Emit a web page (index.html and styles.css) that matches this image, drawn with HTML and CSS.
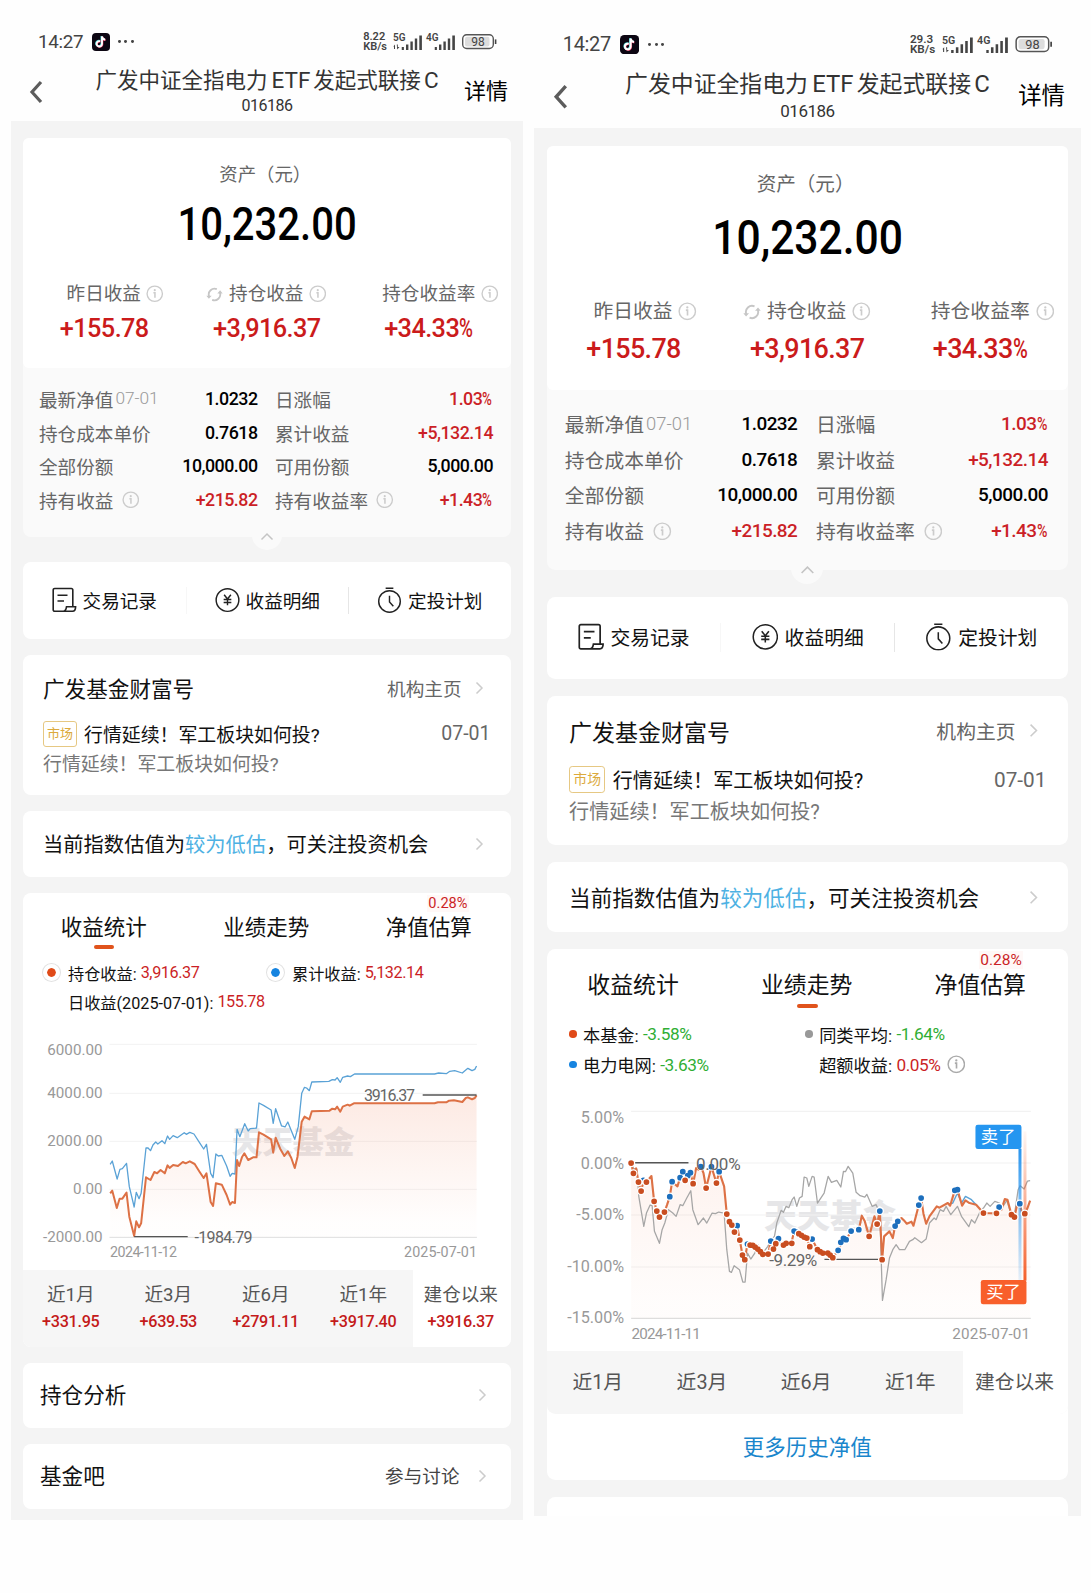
FILE: index.html
```html
<!DOCTYPE html>
<html lang="zh-CN">
<head>
  <meta charset="UTF-8">
  <meta name="viewport" content="width=device-width, initial-scale=1.0">
  <title>广发中证全指电力ETF发起式联接C</title>
  <link rel="stylesheet" href="styles.css">
</head>
<body>
  <!-- shared icons -->
  <svg class="sprite">
    <symbol id="info" viewBox="0 0 18 18">
      <circle cx="9" cy="9" r="7.9" fill="none" stroke="currentColor" stroke-width="1.4"/>
      <circle cx="9" cy="5.3" r="1.1" fill="currentColor"/>
      <path d="M7.6 7.9H9.2V13" fill="none" stroke="currentColor" stroke-width="1.6"/>
    </symbol>
    <symbol id="refresh" viewBox="0 0 18 16">
      <path d="M3.2 10A6.2 6.2 0 0 1 11.5 2.3M14.8 6A6.2 6.2 0 0 1 6.500 13.700" fill="none" stroke="currentColor" stroke-width="1.9"/>
      <path d="M.3 9.2H6L3 12.6zM12 6.8H17.7L15 3.4z" fill="currentColor"/>
    </symbol>
    <symbol id="arrow" viewBox="0 0 9 14">
      <path d="M1.5 1.5L7 7L1.5 12.5" fill="none" stroke="#ccc" stroke-width="1.5"/>
    </symbol>
    <symbol id="back" viewBox="0 0 14 24">
      <path d="M12 2L3 12L12 22" fill="none" stroke="#5c5c5c" stroke-width="3.2"/>
    </symbol>
    <symbol id="tiktok" viewBox="0 0 18 18">
      <rect width="18" height="18" rx="4" fill="#0c0612"/>
      <g fill="none" stroke-width="1.9">
        <path d="M8.2 8.3A2.7 2.7 0 1 0 10 11V3.4C10.2 5.2 11.4 6.4 13.2 6.6" stroke="#4de0e0" transform="translate(-.5 -.4)"/>
        <path d="M8.2 8.3A2.7 2.7 0 1 0 10 11V3.4C10.2 5.2 11.4 6.4 13.2 6.6" stroke="#e8345c" transform="translate(.4 .4)"/>
        <path d="M8.2 8.3A2.7 2.7 0 1 0 10 11V3.4C10.2 5.2 11.4 6.4 13.2 6.6" stroke="#fff"/>
      </g>
    </symbol>
    <symbol id="bars" viewBox="0 0 22 17">
      <path d="M0 14h2.4v3H0zM4.500 11.500h2.400V17H4.500zM8.900 8.600h2.400V17H8.900zM13.300 5.600h2.400V17h-2.400zM17.800 2.400h2.600V17h-2.600z" fill="#444"/>
    </symbol>
    <symbol id="receipt" viewBox="0 0 25 26">
      <path d="M20.8 19V3.2A1.5 1.5 0 0 0 19.3 1.5H2.7A1.5 1.5 0 0 0 1.2 3V22.8A1.5 1.5 0 0 0 2.7 24.3H20.5C22.8 24.3 23.6 22.5 23.6 19.8H14.5C14 23 13 24.3 11.2 24.3M5.5 8.2H15.5M5.5 14H12" fill="none" stroke="#222" stroke-width="1.6"/>
    </symbol>
    <symbol id="yen" viewBox="0 0 26 26">
      <circle cx="13" cy="13" r="11.8" fill="none" stroke="#222" stroke-width="1.5"/>
      <path d="M9.5 7.5L13 12L16.5 7.5M13 12V18.5M9 12.5H17M9 15.5H17" fill="none" stroke="#222" stroke-width="1.5"/>
    </symbol>
    <symbol id="timer" viewBox="0 0 25 27">
      <circle cx="12.5" cy="15" r="11.2" fill="none" stroke="#222" stroke-width="1.5"/>
      <path d="M8.5 1.2H16.5M12.5 9V15.5L16.500 20" fill="none" stroke="#222" stroke-width="1.5"/>
    </symbol>
    <symbol id="fold" viewBox="0 0 14 9">
      <path d="M1.5 7.5L7 2L12.5 7.5" fill="none" stroke="#c4c4c4" stroke-width="1.5"/>
    </symbol>
    <linearGradient id="area" x1="0" y1="0" x2="0" y2="1">
      <stop offset="0" stop-color="#f0825a" stop-opacity=".17"/>
      <stop offset=".9" stop-color="#f0825a" stop-opacity=".01"/>
    </linearGradient>
    <linearGradient id="area2" x1="0" y1="0" x2="0" y2="1">
      <stop offset="0" stop-color="#f0825a" stop-opacity=".1"/>
      <stop offset=".9" stop-color="#f0825a" stop-opacity=".02"/>
    </linearGradient>
    <linearGradient id="sellFade" x1="0" y1="0" x2="0" y2="1">
      <stop offset="0" stop-color="#2a95ee"/>
      <stop offset="1" stop-color="#2a95ee" stop-opacity=".1"/>
    </linearGradient>
    <linearGradient id="buyFade" x1="0" y1="0" x2="0" y2="1">
      <stop offset="0" stop-color="#f4602c" stop-opacity=".05"/>
      <stop offset="1" stop-color="#f4602c"/>
    </linearGradient>
  </svg>

  <div class="phone">
    <div class="status-bar">
      <span class="time">14:27</span>
      <svg class="app-icon"><use href="#tiktok"/></svg>
      <span class="dots"><i></i><i></i><i></i></span>
      <span class="speed">8.22<br>KB/s</span>
      <svg class="signal" viewBox="0 0 110 20">
        <text x="0" y="8" class="net">5G</text>
        <text x="33" y="8" class="net">4G</text>
        <path d="M.3 13.5L2 11.500V16H1V13.500zM3.800 11.500H4.800V14H6.500L4.200 16.500z" fill="#444"/>
        <use href="#bars" x="8.500" width="22" height="17"/>
        <use href="#bars" x="41.500" width="22" height="17"/>
        <rect x="69.700" y="1.700" width="30.600" height="13.800" rx="4" class="shell"/>
        <rect x="72" y="3.800" width="24.500" height="9.600" rx="2" fill="#ddd"/>
        <path d="M101.800 6.400h1.600v4.600h-1.600z" fill="#444"/>
        <text x="85" y="12.900" text-anchor="middle" class="battery">98</text>
      </svg>
    </div>
    <div class="top-bar">
      <svg class="back"><use href="#back"/></svg>
      <div class="fund">
        <div class="fund-name">广发中证全指电力<span class="latin">ETF</span>发起式联接<span class="latin last">C</span></div>
        <div class="fund-code">016186</div>
      </div>
      <div class="detail">详情</div>
    </div>

    <div class="content">
      <div class="summary">
        <div class="asset">
          <div class="asset-label">资产（元）</div>
          <div class="asset-value"><span>10,232.00</span></div>
          <div class="profits">
            <div class="profit">
              <div class="profit-label">昨日收益<svg class="info hang"><use href="#info"/></svg></div>
              <div class="profit-value">+155.78</div>
            </div>
            <div class="profit">
              <div class="profit-label"><svg class="refresh"><use href="#refresh"/></svg>持仓收益<svg class="info hang"><use href="#info"/></svg></div>
              <div class="profit-value">+3,916.37</div>
            </div>
            <div class="profit">
              <div class="profit-label">持仓收益率<svg class="info hang"><use href="#info"/></svg></div>
              <div class="profit-value">+34.33<small>%</small></div>
            </div>
          </div>
        </div>
        <div class="facts">
          <div class="fact"><span>最新净值<em>07-01</em></span><b>1.0232</b></div>
          <div class="fact"><span>日涨幅</span><b class="red">1.03<small>%</small></b></div>
          <div class="fact"><span>持仓成本单价</span><b>0.7618</b></div>
          <div class="fact"><span>累计收益</span><b class="red">+5,132.14</b></div>
          <div class="fact"><span>全部份额</span><b>10,000.00</b></div>
          <div class="fact"><span>可用份额</span><b>5,000.00</b></div>
          <div class="fact"><span>持有收益<svg class="info"><use href="#info"/></svg></span><b class="red">+215.82</b></div>
          <div class="fact"><span>持有收益率<svg class="info"><use href="#info"/></svg></span><b class="red">+1.43<small>%</small></b></div>
        </div>
        <div class="fold"><svg><use href="#fold"/></svg></div>
      </div>

      <div class="card actions">
        <div class="action"><svg><use href="#receipt"/></svg><span>交易记录</span></div>
        <div class="action"><svg><use href="#yen"/></svg><span>收益明细</span></div>
        <div class="action"><svg><use href="#timer"/></svg><span>定投计划</span></div>
      </div>

      <div class="card news">
        <div class="news-head"><h2>广发基金财富号</h2><span>机构主页</span><svg class="arrow"><use href="#arrow"/></svg></div>
        <div class="news-row"><span class="tag">市场</span><span class="news-title">行情延续！军工板块如何投?</span><span class="date">07-01</span></div>
        <div class="news-desc">行情延续！军工板块如何投?</div>
      </div>

      <div class="card valuation">
        <p>当前指数估值为<span>较为低估</span>，可关注投资机会</p>
        <svg class="arrow"><use href="#arrow"/></svg>
      </div>

      <div class="card stats">
        <div class="tabs">
          <div class="tab active">收益统计</div>
          <div class="tab">业绩走势</div>
          <div class="tab">净值估算<span class="badge">0.28%</span></div>
        </div>
        <div class="legend ringed">
          <div><i class="dot orange"></i>持仓收益: <b class="red">3,916.37</b></div>
          <div><i class="dot blue"></i>累计收益: <b class="red">5,132.14</b></div>
          <div><i class="dot none"></i>日收益(2025-07-01): <b class="red">155.78</b></div>
        </div>
        <svg class="chart" viewBox="0 0 488 250">
          <text x="270" y="132" class="watermark" textLength="123">天天基金</text>
          <g transform="translate(-23 9) scale(.3476 .33333)">
            <path class="grid" d="M315 43H1372M315 190H1372M315 334H1372M315 478H1372"/>
            <path class="axis" d="M315 622H1372"/>
            <path fill="url(#area)" d="M317 490L323 482L336 534L344 506L352 506L364 488L372 560L386 618L392 574L400 592L406 580L420 442L433 450L444 426L462 420L474 430L482 406L498 405L526 396L546 394L560 402L586 444L594 430L606 516L613 528L621 460L638 464L662 524L676 519L682 390L688 408L703 370L714 390L738 382L745 307L780 328L786 368L793 323L818 378L828 364L848 414L868 275L876 260L890 268L897 244L948 242L970 230L979 245L986 230L1018 220H1250L1306 211L1330 216L1346 202L1371 196V622H317z"/>
            <path class="line blue" d="M317 403L323 393L337 447L345 418L352 416L364 400L372 470L386 531L392 487L400 506L406 490L420 354L426 354L433 362L440 345L448 336L454 342L466 332L474 341L482 318L488 328L498 317L510 323L530 308L536 313L546 307L558 312L574 338L586 357L594 343L606 430L613 443L621 372L628 378L638 376L652 408L662 439L668 430L676 432L682 298L690 320L704 281L714 303L720 296L738 294L745 219L758 226L780 240L786 280L793 236L810 288L820 291L828 276L848 328L858 290L868 190L876 172L882 174L890 182L897 156L946 154L956 149L964 150L970 143L979 157L986 142L1000 138L1008 140L1020 132H1250L1262 129L1284 131L1294 124L1308 122L1330 129L1340 120L1346 115L1358 122L1366 118L1371 108"/>
            <path class="line orange" d="M317 490L323 482L336 534L344 506L352 506L364 488L372 560L386 618L392 574L400 592L406 580L420 442L433 450L444 426L452 430L462 420L474 430L482 406L488 414L498 405L512 408L526 396L534 400L546 394L560 402L574 425L586 444L594 430L606 516L613 528L621 460L638 464L652 495L662 524L668 516L676 519L682 390L688 408L696 382L703 370L714 390L728 382L738 382L745 307L758 314L780 328L786 368L793 323L806 356L818 378L828 364L838 384L848 414L856 380L868 275L876 260L890 268L897 244L948 242L956 236L964 238L970 230L979 245L986 230L1000 224L1006 227L1018 220H1250L1260 217L1284 217L1292 212L1306 211L1330 216L1340 204L1346 202L1358 208L1366 204L1371 196"/>
            <path class="pointer" d="M1216 195H1371M386 620H540"/>
          </g>
          <g class="scale" text-anchor="end">
            <text x="79.500" y="34">6000.00</text>
            <text x="79.500" y="76.500">4000.00</text>
            <text x="79.500" y="124.500">2000.00</text>
            <text x="79.500" y="173">0.00</text>
            <text x="79.500" y="221">-2000.00</text>
          </g>
          <text x="87" y="236" class="day" textLength="67">2024-11-12</text>
          <text x="454" y="236" class="day" text-anchor="end" textLength="73">2025-07-01</text>
          <text x="341" y="80" class="mark" textLength="51">3916.37</text>
          <text x="171.500" y="221.500" class="mark" textLength="58">-1984.79</text>
        </svg>
        <div class="periods">
          <div>近1月<b>+331.95</b></div>
          <div>近3月<b>+639.53</b></div>
          <div>近6月<b>+2791.11</b></div>
          <div>近1年<b>+3917.40</b></div>
          <div class="active">建仓以来<b>+3916.37</b></div>
        </div>
      </div>

      <div class="card row">
        <h2>持仓分析</h2>
        <svg class="arrow"><use href="#arrow"/></svg>
      </div>
      <div class="card row">
        <h2>基金吧</h2>
        <span>参与讨论</span>
        <svg class="arrow"><use href="#arrow"/></svg>
      </div>
    </div>
  </div>

  <div class="phone large">
    <div class="status-bar">
      <span class="time">14:27</span>
      <svg class="app-icon"><use href="#tiktok"/></svg>
      <span class="dots"><i></i><i></i><i></i></span>
      <span class="speed">29.3<br>KB/s</span>
      <svg class="signal" viewBox="0 0 110 20">
        <text x="0" y="8" class="net">5G</text>
        <text x="33" y="8" class="net">4G</text>
        <path d="M.3 13.500L2 11.500V16H1V13.500zM3.800 11.500H4.800V14H6.500L4.200 16.500z" fill="#444"/>
        <use href="#bars" x="8.500" width="22" height="17"/>
        <use href="#bars" x="41.500" width="22" height="17"/>
        <rect x="69.700" y="1.700" width="30.600" height="13.800" rx="4" class="shell"/>
        <rect x="72" y="3.800" width="24.500" height="9.600" rx="2" fill="#ddd"/>
        <path d="M101.800 6.400h1.600v4.600h-1.600z" fill="#444"/>
        <text x="85" y="12.900" text-anchor="middle" class="battery">98</text>
      </svg>
    </div>
    <div class="top-bar">
      <svg class="back"><use href="#back"/></svg>
      <div class="fund">
        <div class="fund-name">广发中证全指电力<span class="latin">ETF</span>发起式联接<span class="latin last">C</span></div>
        <div class="fund-code">016186</div>
      </div>
      <div class="detail">详情</div>
    </div>

    <div class="content">
      <div class="summary">
        <div class="asset">
          <div class="asset-label">资产（元）</div>
          <div class="asset-value"><span>10,232.00</span></div>
          <div class="profits">
            <div class="profit">
              <div class="profit-label">昨日收益<svg class="info hang"><use href="#info"/></svg></div>
              <div class="profit-value">+155.78</div>
            </div>
            <div class="profit">
              <div class="profit-label"><svg class="refresh"><use href="#refresh"/></svg>持仓收益<svg class="info hang"><use href="#info"/></svg></div>
              <div class="profit-value">+3,916.37</div>
            </div>
            <div class="profit">
              <div class="profit-label">持仓收益率<svg class="info hang"><use href="#info"/></svg></div>
              <div class="profit-value">+34.33<small>%</small></div>
            </div>
          </div>
        </div>
        <div class="facts">
          <div class="fact"><span>最新净值<em>07-01</em></span><b>1.0232</b></div>
          <div class="fact"><span>日涨幅</span><b class="red">1.03<small>%</small></b></div>
          <div class="fact"><span>持仓成本单价</span><b>0.7618</b></div>
          <div class="fact"><span>累计收益</span><b class="red">+5,132.14</b></div>
          <div class="fact"><span>全部份额</span><b>10,000.00</b></div>
          <div class="fact"><span>可用份额</span><b>5,000.00</b></div>
          <div class="fact"><span>持有收益<svg class="info"><use href="#info"/></svg></span><b class="red">+215.82</b></div>
          <div class="fact"><span>持有收益率<svg class="info"><use href="#info"/></svg></span><b class="red">+1.43<small>%</small></b></div>
        </div>
        <div class="fold"><svg><use href="#fold"/></svg></div>
      </div>

      <div class="card actions">
        <div class="action"><svg><use href="#receipt"/></svg><span>交易记录</span></div>
        <div class="action"><svg><use href="#yen"/></svg><span>收益明细</span></div>
        <div class="action"><svg><use href="#timer"/></svg><span>定投计划</span></div>
      </div>

      <div class="card news">
        <div class="news-head"><h2>广发基金财富号</h2><span>机构主页</span><svg class="arrow"><use href="#arrow"/></svg></div>
        <div class="news-row"><span class="tag">市场</span><span class="news-title">行情延续！军工板块如何投?</span><span class="date">07-01</span></div>
        <div class="news-desc">行情延续！军工板块如何投?</div>
      </div>

      <div class="card valuation">
        <p>当前指数估值为<span>较为低估</span>，可关注投资机会</p>
        <svg class="arrow"><use href="#arrow"/></svg>
      </div>

      <div class="card stats">
        <div class="tabs">
          <div class="tab">收益统计</div>
          <div class="tab active">业绩走势</div>
          <div class="tab">净值估算<span class="badge">0.28%</span></div>
        </div>
        <div class="legend">
          <div><i class="dot orange"></i>本基金: <b class="green">-3.58%</b></div>
          <div><i class="dot gray"></i>同类平均: <b class="green">-1.64%</b></div>
          <div><i class="dot blue"></i>电力电网: <b class="green">-3.63%</b></div>
          <div><i class="dot none"></i>超额收益: <b class="red">0.05%</b><svg class="info"><use href="#info"/></svg></div>
        </div>
        <svg class="chart" viewBox="0 0 488 250">
          <text x="266" y="134" class="watermark" textLength="124">天天基金</text>
          <g transform="translate(49.300 4.400) scale(.3133)">
            <path class="grid" d="M95 65H1294M95 220H1294M95 376H1294M95 532H1294"/>
            <path class="axis" d="M95 686H1294"/>
            <path fill="url(#area2)" d="M95 220L102 251L117 277L125 304L141 277L156 259L172 364L180 382L195 367L218 276L234 290L250 246L265 258L273 249L281 282L290 235L304 231L320 295L336 231L351 280L359 246L374 290L382 373L405 427L421 451L436 510L444 463L490 494L506 493L514 454L537 447L576 460L584 424L622 445L631 471L654 480L700 504L716 482L740 450L778 420L787 378L809 440L825 380L833 403L848 510L870 425L906 385L942 408L965 325L980 402L1012 350L1045 340L1066 302L1088 348L1130 345L1152 370L1191 371L1216 328L1245 382L1261 342L1276 372L1292 333V686H95z"/>
            <path class="line gray" d="M95 220L102 236L112 238L118 320L133 410L141 370L152 346L158 348L165 425L180 461L188 420L196 400L207 360L220 370L230 380L242 345L250 348L262 325L274 303L280 360L296 405L312 385L322 400L338 370L348 372L358 367L374 370L382 480L390 545L396 548L404 528L420 540L430 577L437 577L444 490L454 508L466 490L475 465L490 490L505 470L515 450L525 440L532 400L545 362L552 368L560 350L568 354L578 330L584 322L592 350L600 325L608 320L614 262L622 265L628 290L638 260L644 262L654 340L664 325L674 310L686 260L696 278L712 272L724 292L732 245L738 246L746 230L760 250L770 308L782 318L796 322L802 314L818 350L830 345L841 370L849 632L860 570L870 505L880 480L890 465L900 480L916 480L930 455L940 450L946 444L966 459L980 448L990 400L1004 385L1010 390L1022 360L1032 365L1040 350L1054 375L1074 350L1086 380L1108 411L1116 390L1126 400L1140 370L1152 355L1162 340L1172 350L1186 335L1200 340L1206 352L1214 345L1222 332L1234 370L1245 375L1256 300L1262 288L1274 298L1284 274L1292 273"/>
            <path class="line blue" d="M1046 345L1060 340L1074 310L1086 340L1098 320L1116 330L1130 345"/>
            <path class="line orange" d="M95 220L102 251L110 236L117 277L125 304L133 272L141 277L156 259L164 335L172 364L180 382L188 362L195 367L203 345L211 321L218 276L234 290L242 264L250 246L257 272L265 258L273 249L281 282L290 235L297 240L304 231L312 250L320 295L336 231L351 280L359 246L374 290L382 373L390 396L398 406L405 427L413 408L421 451L429 496L436 510L444 463L460 466L490 494L506 493L514 454L522 478L537 447L545 465L576 460L584 424L600 434L622 445L631 471L638 448L654 480L670 490L700 504L716 482L732 448L740 450L755 424L778 420L787 378L796 395L809 440L825 380L833 403L841 364L848 510L854 440L870 425L880 445L887 409L895 395L906 385L916 395L922 402L936 396L942 408L958 346L965 325L972 372L980 402L990 380L1012 350L1020 354L1045 340L1052 348L1066 302L1074 300L1088 348L1098 332L1110 340L1130 345L1152 370L1191 371L1199 352L1206 360L1216 328L1224 330L1236 375L1245 382L1252 350L1261 342L1268 372L1276 372L1284 355L1292 333"/>
            <path class="pointer" d="M95 219H267M675 509H848"/>
            <rect x="1257" y="177" width="9" height="400" fill="url(#sellFade)"/>
            <rect x="1272" y="125" width="9" height="448" fill="url(#buyFade)"/>
            <!-- sell points: white ring, then the dot -->
            <path class="ring" d="M132 272h0M211 321h0M218 276h0M242 264h0M250 246h0M265 258h0M273 249h0M304 231h0M336 231h0M359 246h0M413 408h0M444 463h0M514 454h0M537 447h0M584 424h0M590 427h0M638 448h0M716 482h0M724 458h0M732 446h0M740 450h0M755 424h0M778 420h0M841 364h0M887 409h0M895 395h0M958 346h0M965 325h0M1066 302h0M1074 300h0M1199 352h0M1261 342h0"/>
            <path class="sell" d="M132 272h0M211 321h0M218 276h0M242 264h0M250 246h0M265 258h0M273 249h0M304 231h0M336 231h0M359 246h0M413 408h0M444 463h0M514 454h0M537 447h0M584 424h0M590 427h0M638 448h0M716 482h0M724 458h0M732 446h0M740 450h0M755 424h0M778 420h0M841 364h0M887 409h0M895 395h0M958 346h0M965 325h0M1066 302h0M1074 300h0M1199 352h0M1261 342h0"/>
            <!-- buy points -->
            <path class="ring" d="M95 220h0M102 251h0M117 277h0M125 304h0M141 277h0M164 335h0M172 364h0M180 382h0M195 367h0M257 272h0M281 282h0M320 295h0M351 280h0M382 373h0M390 396h0M397 406h0M405 427h0M421 451h0M429 496h0M436 510h0M452 466h0M460 467h0M467 472h0M475 478h0M483 486h0M490 494h0M506 493h0M522 478h0M529 462h0M552 466h0M560 461h0M577 461h0M598 432h0M606 437h0M614 442h0M622 445h0M631 471h0M654 480h0M662 486h0M670 490h0M685 490h0M692 496h0M700 504h0M809 440h0M833 403h0M848 510h0M1152 370h0M1191 371h0M1236 375h0M1245 382h0M1276 372h0"/>
            <path class="buy" d="M95 220h0M102 251h0M117 277h0M125 304h0M141 277h0M164 335h0M172 364h0M180 382h0M195 367h0M257 272h0M281 282h0M320 295h0M351 280h0M382 373h0M390 396h0M397 406h0M405 427h0M421 451h0M429 496h0M436 510h0M452 466h0M460 467h0M467 472h0M475 478h0M483 486h0M490 494h0M506 493h0M522 478h0M529 462h0M552 466h0M560 461h0M577 461h0M598 432h0M606 437h0M614 442h0M622 445h0M631 471h0M654 480h0M662 486h0M670 490h0M685 490h0M692 496h0M700 504h0M809 440h0M833 403h0M848 510h0M1152 370h0M1191 371h0M1236 375h0M1245 382h0M1276 372h0"/>
            <rect x="1128" y="105" width="138" height="73" rx="7" fill="#2596f0"/>
            <rect x="1144" y="571" width="137" height="73" rx="7" fill="#f85f2b"/>
            <text x="1196" y="159" class="flag">卖了</text>
            <text x="1212" y="625" class="flag">买了</text>
          </g>
          <text x="140" y="79.500" class="mark" textLength="42">0.00%</text>
          <text x="209" y="170" class="mark" textLength="45">-9.29%</text>
          <g class="scale" text-anchor="end">
            <text x="72.500" y="36">5.00%</text>
            <text x="72.500" y="78.500">0.00%</text>
            <text x="72.500" y="127">-5.00%</text>
            <text x="72.500" y="175.500">-10.00%</text>
            <text x="72.500" y="223.500">-15.00%</text>
          </g>
          <text x="79.500" y="239" class="day" textLength="65">2024-11-11</text>
          <text x="454" y="239" class="day" text-anchor="end" textLength="73">2025-07-01</text>
        </svg>
        <div class="periods short">
          <div>近1月</div>
          <div>近3月</div>
          <div>近6月</div>
          <div>近1年</div>
          <div class="active">建仓以来</div>
        </div>
        <div class="more">更多历史净值</div>
      </div>

      <div class="card cut"></div>
    </div>
  </div>
</body>
</html>
```

FILE: styles.css
```css
* {
  box-sizing: border-box;
}
body {
  margin: 0;
  padding-left: 11px;
  display: flex;
  align-items: flex-start;
  gap: 11px;
  background-color: #fefefe;
  color: #111;
  font-family: Roboto, "Noto Sans CJK SC", sans-serif;
}
h2, p {
  margin: 0;
  font-weight: normal;
}
b, em, i {
  font-style: normal;
}
svg {
  display: block;
  flex-shrink: 0;
}
.sprite {
  position: absolute;
  width: 0;
  height: 0;
}
.phone {
  width: 512px;
  flex-shrink: 0;
  white-space: nowrap;
}
/* the second phone is the same screen, a little bigger */
.large {
  width: 514px;
  zoom: 1.064;
}

/* status bar */
.status-bar {
  display: flex;
  align-items: center;
  height: 57px;
  padding: 26px 20px 0 27px;
  color: #444;
}
.time {
  width: 54px;
  font-size: 18.8px;
  letter-spacing: -0.3px;
}
.app-icon {
  width: 18px;
  height: 18px;
}
.dots {
  display: flex;
  gap: 3.6px;
  margin-left: 8px;
}
.dots i {
  width: 2.8px;
  height: 2.8px;
  border-radius: 50%;
  background-color: #444;
}
.speed {
  margin-left: auto;
  margin-right: 6px;
  font-size: 11px;
  line-height: 9.8px;
  font-weight: 600;
}
.signal {
  width: 110px;
  height: 20px;
  margin-top: 3px;
}
.large .signal {
  margin-right: 1px;
}
.net {
  fill: #444;
  font-size: 10px;
  font-weight: 600;
}
.shell {
  fill: #fff;
  stroke: #555;
  stroke-width: 1.4;
}
.battery {
  fill: #444;
  font-size: 12px;
}

/* top bar */
.top-bar {
  display: grid;
  grid-template-columns: 80px 1fr 80px;
  align-items: center;
  height: 64px;
  padding-top: 5px;
}
.large .top-bar {
  height: 63px;
}
.back {
  width: 14px;
  height: 24px;
  margin-left: 18px;
}
.fund {
  display: flex;
  flex-direction: column;
  align-items: center;
  gap: 3px;
  color: #333;
}
.fund-name {
  font-size: 21.5px;
  line-height: 24px;
}
.latin {
  margin: 0 3px 0 4px;
  font-size: 22.5px;
}
.latin.last {
  margin: 0 0 0 3px;
}
.fund-code {
  font-size: 16px;
  line-height: 20px;
  letter-spacing: -0.5px;
}
.detail {
  justify-self: end;
  margin-right: 15px;
  color: #000;
  font-size: 22px;
  line-height: 30px;
}

.content {
  padding: 17px 12.5px 11px 12px;
  background-color: #f4f4f4;
}

/* summary */
.summary {
  position: relative;
  height: 399px;
  margin-bottom: 25px;
  border-radius: 6px 6px 8px 8px;
  background-color: #fafafa;
  color: #666;
}
.asset {
  height: 229.5px;
  padding-top: 24px;
  border-radius: 6px;
  background-color: #fff;
  text-align: center;
}
.asset-label {
  margin-left: -3px;
  font-size: 18.4px;
  line-height: 26px;
}
.asset-value {
  height: 50px;
  margin-top: 11px;
  color: #000;
  font-size: 46px;
  line-height: 50px;
  font-weight: 500;
}
.asset-value span {
  display: inline-block;
  transform: scaleX(0.87);
}
.profits {
  display: grid;
  grid-template-columns: repeat(3, 1fr);
  margin-top: 31px;
}
.profit-label {
  display: flex;
  justify-content: center;
  align-items: center;
  margin-left: -1px;
  font-size: 18.6px;
  line-height: 28px;
}
.info {
  width: 17.5px;
  height: 17.5px;
  color: #ccc;
}
.hang {
  margin-left: 5.5px;
  margin-right: -23px;
}
.refresh {
  width: 17px;
  height: 15px;
  margin-left: -23px;
  margin-right: 6px;
  color: #c6c6c6;
}
.profit-value {
  margin-top: 5px;
  color: #cb1b1b;
  font-size: 25.3px;
  line-height: 32px;
  font-weight: 500;
  letter-spacing: -0.6px;
}
small {
  display: inline-block;
  width: 0.6em;
  font-size: 1em;
  transform: scaleX(0.75);
  transform-origin: left;
}
.facts {
  display: grid;
  grid-template-columns: 218.5px 218px;
  column-gap: 17.5px;
  padding: 14px 16px 0;
}
.large .facts {
  padding: 14.5px 17px 0;
}
.fact {
  display: flex;
  justify-content: space-between;
  align-items: center;
  height: 33.7px;
  font-size: 18.6px;
}
.fact span {
  display: flex;
  align-items: center;
}
.fact em {
  margin-left: 2px;
  color: #999;
  font-size: 17.3px;
  font-weight: 300;
}
.fact b {
  color: #000;
  font-size: 17.8px;
  font-weight: 500;
  letter-spacing: -0.5px;
}
.fact .info {
  margin-left: 8.5px;
}
.fact .red, .red {
  color: #cb1f26;
}
.green {
  color: #2fae34;
}
.fold {
  position: absolute;
  left: 50%;
  bottom: -13px;
  width: 30px;
  height: 30px;
  margin-left: -15px;
  padding: 12px 8px;
  border-radius: 50%;
  background-color: #fafafa;
}
.fold svg {
  width: 14px;
  height: 9px;
}

/* cards */
.card {
  margin-bottom: 16.2px;
  border-radius: 8px;
  background-color: #fff;
}
.card:last-child {
  margin-bottom: 0;
}
.arrow {
  width: 9px;
  height: 14px;
}
.actions {
  display: grid;
  grid-template-columns: repeat(3, 1fr);
  align-items: center;
  height: 77px;
}
.action {
  display: flex;
  justify-content: center;
  align-items: center;
  gap: 6px;
  height: 27px;
  font-size: 18.6px;
}
.action span {
  margin-top: -2px;
}
.action + .action {
  border-left: 1px solid #f7f7f7;
}
.action:last-child {
  border-left-color: #e6e6e6;
}
.action svg {
  width: 25px;
  height: 26px;
  margin-top: -1px;
}
.news {
  height: 140px;
  padding: 17px 20px 0;
}
.large .news, .large .valuation {
  padding-left: 21px;
}
.news-head {
  display: flex;
  align-items: center;
  height: 31px;
}
h2 {
  flex: 1;
  font-size: 21.6px;
}
.news-head span {
  margin-right: 13px;
  color: #666;
  font-size: 18.6px;
}
.news-head .arrow, .valuation .arrow {
  margin-right: 7px;
}
.news-row {
  display: flex;
  align-items: center;
  height: 26px;
  margin-top: 17.5px;
}
.tag {
  width: 34px;
  height: 26px;
  border: 1px solid #e6c883;
  border-radius: 3px;
  color: #dcaa3c;
  font-size: 13px;
  line-height: 24px;
  text-align: center;
}
.news-title {
  flex: 1;
  margin-left: 7px;
  font-size: 18.9px;
}
.date {
  color: #666;
  font-size: 19.5px;
}
.news-desc {
  margin-top: 4px;
  color: #777;
  font-size: 18.9px;
  line-height: 27px;
}
.valuation {
  display: flex;
  justify-content: space-between;
  align-items: center;
  height: 65.5px;
  padding: 0 20px;
  font-size: 20.3px;
}
.valuation p {
  margin-top: -2px;
}
.valuation span {
  color: #4db1e3;
}

/* chart card */
.tabs {
  display: grid;
  grid-template-columns: repeat(3, 1fr);
  height: 64px;
}
.tab {
  position: relative;
  padding: 19px 1px 0 0;
  font-size: 21.5px;
  line-height: 31px;
  text-align: center;
}
.large .tab {
  padding-top: 20px;
}
.tab.active::after {
  content: "";
  position: absolute;
  left: 50%;
  top: 51.5px;
  width: 20px;
  height: 4px;
  margin-left: -10px;
  border-radius: 2px;
  background-color: #e0531c;
}
.badge {
  position: absolute;
  right: 42px;
  top: 1.5px;
  padding: 0 1px;
  background-color: #fff8f7;
  color: #cb1f26;
  font-size: 14.6px;
  line-height: 17px;
}
.legend {
  display: grid;
  grid-template-columns: 222px 1fr;
  height: 63.5px;
  padding: 1.5px 0 0 21px;
  font-size: 16.2px;
  align-content: start;
}
.legend div {
  display: flex;
  align-items: center;
  height: 28.7px;
}
.legend b {
  margin-left: 4px;
  font-weight: normal;
  letter-spacing: -0.4px;
}
.legend .info {
  margin-left: 6px;
  color: #aaa;
}
.dot {
  width: 7px;
  height: 7px;
  margin-right: 6px;
  border-radius: 50%;
}
.ringed {
  grid-template-columns: 224px 1fr;
  padding-left: 20px;
}
.ringed .dot {
  width: 17px;
  height: 17px;
  margin-right: 8px;
  border: 4.5px solid #fff;
  box-shadow: 0 0 0 1px #e2e2e2;
  background-clip: padding-box;
}
.dot.orange {
  background-color: #e04a18;
}
.dot.blue {
  background-color: #1684e0;
}
.dot.gray {
  background-color: #999;
}
.ringed .none {
  border-color: transparent;
  box-shadow: none;
}
.chart {
  width: 488px;
  height: 250px;
}
.chart path {
  vector-effect: non-scaling-stroke;
}
.watermark {
  fill: #e6e6e8;
  font-family: "Liberation Serif", "Noto Sans CJK SC", serif;
  font-size: 31px;
  font-weight: 900;
  text-anchor: middle;
}
.grid {
  stroke: #f2f2f2;
}
.axis {
  stroke: #dedede;
}
.line {
  fill: none;
  stroke-linejoin: round;
}
.line.orange {
  stroke: #dd7145;
  stroke-width: 2;
}
.line.blue {
  stroke: #5aa2d6;
  stroke-width: 1.3;
}
.line.gray {
  stroke: #a6a6a6;
  stroke-width: 1.2;
}
.pointer {
  stroke: #555;
  stroke-width: 1.3;
}
.ring, .sell, .buy {
  fill: none;
  stroke: #fff;
  stroke-width: 7.8;
  stroke-linecap: round;
}
.sell {
  stroke: #1d6fbd;
  stroke-width: 5.4;
}
.buy {
  stroke: #c94d20;
  stroke-width: 5.4;
}
.flag {
  fill: #fff;
  font-size: 52px;
  text-anchor: middle;
}
.scale {
  fill: #999;
  font-size: 15.2px;
}
.day {
  fill: #999;
  font-size: 14.3px;
}
.mark {
  fill: #666;
  font-size: 16px;
}
.periods {
  display: grid;
  grid-template-columns: repeat(5, 1fr);
  height: 77px;
  margin-top: -1px;
  border-radius: 0 0 8px 8px;
  background-color: #f6f6f6;
}
.periods div {
  padding: 11px 2px 0 0;
  color: #555;
  font-size: 18.6px;
  line-height: 28px;
  text-align: center;
}
.periods b {
  display: block;
  color: #c41a1a;
  font-size: 16.2px;
  line-height: 26px;
  font-weight: 500;
  letter-spacing: -0.3px;
}
.periods .active {
  border-radius: 0 0 8px 0;
  background-color: #fff;
}
.short {
  height: 59px;
  margin-top: 0;
}
.short div {
  padding-top: 16.5px;
}
.more {
  height: 62.5px;
  padding-top: 2px;
  color: #1a86cc;
  font-size: 20.2px;
  line-height: 60px;
  text-align: center;
}
.row {
  display: flex;
  align-items: center;
  height: 65px;
  padding: 0 24px 0 17px;
}
.row h2, .row span {
  margin-top: -3px;
}
.row span {
  margin-right: 18px;
  color: #444;
  font-size: 18.6px;
}
.large .content {
  padding-bottom: 0;
}
.cut {
  height: 18px;
  border-radius: 8px 8px 0 0;
}
```
